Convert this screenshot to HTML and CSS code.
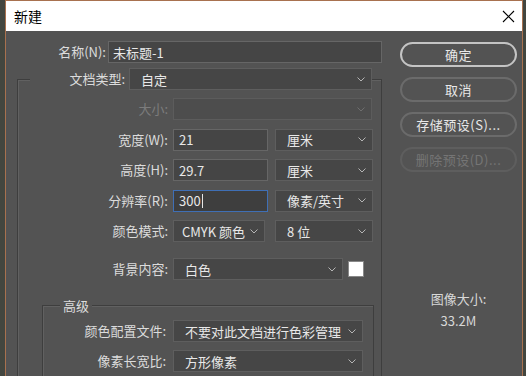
FILE: index.html
```html
<!DOCTYPE html>
<html lang="zh-CN">
<head>
    <meta charset="UTF-8">
    <title>新建</title>
    <link rel="stylesheet" href="styles.css">
</head>
<body>
    <div class="window">
        <!-- Title bar -->
        <div class="titlebar">
            <span class="title">新建</span>
            <svg class="close" width="13" height="13" viewBox="0 0 13 13">
                <path d="M1 1 L12 12 M12 1 L1 12" stroke="#000" stroke-width="1.1" fill="none"/>
            </svg>
        </div>
        <div class="dialog">
            <div class="form">
                <div class="name-row">
                    <div class="lbl">名称(N):</div>
                    <div class="field name-field">未标题-1</div>
                </div>
                <fieldset class="group">
                    <legend class="legend">
                        <span class="lbl doc-lbl">文档类型:</span>
                        <span class="field select doc-select">自定<svg class="arrow" width="8" height="5" viewBox="0 0 8 5"><path d="M0.5 0.5 L4 4 L7.5 0.5" stroke="#b5b5b5" fill="none"/></svg></span>
                    </legend>
                    <div class="row first">
                        <div class="lbl disabled">大小:</div>
                        <div class="field select disabled-field w-full"><svg class="arrow" width="8" height="5" viewBox="0 0 8 5"><path d="M0.5 0.5 L4 4 L7.5 0.5" stroke="#6e6e6e" fill="none"/></svg></div>
                    </div>
                    <div class="row">
                        <div class="lbl">宽度(W):</div>
                        <div class="field w-num">21</div>
                        <div class="field select w-unit">厘米<svg class="arrow" width="8" height="5" viewBox="0 0 8 5"><path d="M0.5 0.5 L4 4 L7.5 0.5" stroke="#b5b5b5" fill="none"/></svg></div>
                    </div>
                    <div class="row">
                        <div class="lbl">高度(H):</div>
                        <div class="field w-num">29.7</div>
                        <div class="field select w-unit">厘米<svg class="arrow" width="8" height="5" viewBox="0 0 8 5"><path d="M0.5 0.5 L4 4 L7.5 0.5" stroke="#b5b5b5" fill="none"/></svg></div>
                    </div>
                    <div class="row">
                        <div class="lbl">分辨率(R):</div>
                        <div class="field w-num focused">300<span class="caret"></span></div>
                        <div class="field select w-unit">像素/英寸<svg class="arrow" width="8" height="5" viewBox="0 0 8 5"><path d="M0.5 0.5 L4 4 L7.5 0.5" stroke="#b5b5b5" fill="none"/></svg></div>
                    </div>
                    <div class="row">
                        <div class="lbl">颜色模式:</div>
                        <div class="field select w-mode">CMYK 颜色<svg class="arrow" width="8" height="5" viewBox="0 0 8 5"><path d="M0.5 0.5 L4 4 L7.5 0.5" stroke="#b5b5b5" fill="none"/></svg></div>
                        <div class="field select w-unit">8 位<svg class="arrow" width="8" height="5" viewBox="0 0 8 5"><path d="M0.5 0.5 L4 4 L7.5 0.5" stroke="#b5b5b5" fill="none"/></svg></div>
                    </div>
                    <div class="row bg-row">
                        <div class="lbl">背景内容:</div>
                        <div class="field select w-bg">白色<svg class="arrow" width="8" height="5" viewBox="0 0 8 5"><path d="M0.5 0.5 L4 4 L7.5 0.5" stroke="#b5b5b5" fill="none"/></svg></div>
                        <div class="swatch"></div>
                    </div>
                    <fieldset class="group inner">
                        <legend class="legend adv">高级</legend>
                        <div class="row first">
                            <div class="lbl">颜色配置文件:</div>
                            <div class="field select w-adv">不要对此文档进行色彩管理<svg class="arrow" width="8" height="5" viewBox="0 0 8 5"><path d="M0.5 0.5 L4 4 L7.5 0.5" stroke="#b5b5b5" fill="none"/></svg></div>
                        </div>
                        <div class="row">
                            <div class="lbl">像素长宽比:</div>
                            <div class="field select w-adv">方形像素<svg class="arrow" width="8" height="5" viewBox="0 0 8 5"><path d="M0.5 0.5 L4 4 L7.5 0.5" stroke="#b5b5b5" fill="none"/></svg></div>
                        </div>
                    </fieldset>
                </fieldset>
            </div>
            <div class="side">
                <div class="btn default">确定</div>
                <div class="btn">取消</div>
                <div class="btn">存储预设(S)...</div>
                <div class="btn disabled">删除预设(D)...</div>
                <div class="size-info">
                    <div>图像大小:</div>
                    <div class="size-value">33.2M</div>
                </div>
            </div>
        </div>
    </div>
</body>
</html>
```

FILE: styles.css
```css
* {margin: 0; padding: 0; box-sizing: border-box;}
body {font-family: "Noto Sans CJK SC", "Noto Sans", sans-serif; font-size: 13px; background-color: #43463f; width: 526px; height: 376px; overflow: hidden;}
.window {margin-left: 5px; width: 518px; height: 376px; border: 1px solid #a8714f; border-bottom: none; background-color: #535353; color: #dcdcdc; overflow: hidden;}
/* Title bar */
.titlebar {height: 30px; background-color: #fff; display: flex; align-items: center; justify-content: space-between; padding: 0 7px 0 8px; color: #000; font-size: 14px;}
.close {display: block;}
/* Dialog body */
.dialog {display: flex; padding-top: 10px;}
.form {width: 376px; flex: none;}
.lbl {text-align: right; white-space: nowrap; flex: none; line-height: 22px;}
.lbl.disabled {color: #7c7c7c;}
.name-row {display: flex; align-items: center; gap: 2px; margin-left: 11px; height: 22px;}
.name-row .lbl {width: 89px;}
.field {height: 22px; background-color: #454545; border: 1px solid #666; color: #e8e8e8; padding: 0 5px; display: flex; align-items: center; white-space: nowrap; flex: none;}
.name-field {width: 274px; padding-left: 4px;}
.select {justify-content: space-between; padding: 0 6px 0 11px; background-color: #464646; border-color: #5e5e5e;}
.arrow {display: block; flex: none;}
.disabled-field {background-color: #4d4d4d; border-color: #5c5c5c; justify-content: flex-end;}
.focused {border-color: #3f6fb5; background-color: #3e3e3e;}
.caret {display: inline-block; width: 1px; height: 14px; background-color: #e6e6e6; margin-left: 1px;}
/* Group boxes */
.group {margin: 5px 0 0 11px; width: 365px; border: 1px solid #3e3e3e; box-shadow: inset 1px 1px 0 #616161; padding: 0 8px 60px 12px; min-width: 0;}
.legend {display: flex; align-items: center; gap: 4px; padding: 0; background-color: #535353;}
.doc-lbl {width: 95px;}
.doc-select {width: 243px;}
.row {display: flex; align-items: center; height: 22px; margin-top: 8.5px;}
.row.first {margin-top: 8px;}
.row .lbl {width: 138px; margin-right: 5px;}
.w-full {width: 199px;}
.w-num {width: 95px; margin-right: 7px;}
.w-unit {width: 98px;}
.w-mode {width: 92px; margin-right: 10px; padding-left: 8px;}
.bg-row {margin-top: 16px;}
.w-bg {width: 170px; margin-right: 5px;}
.swatch {width: 16px; height: 16px; background-color: #fff; border: 1px solid #888;}
.group.inner {margin: 17px 0 0 12px; width: 332px; padding: 0 10px 60px 17px;}
.legend.adv {padding: 0 3px; line-height: 17px; display: block;}
.inner .row.first {margin-top: 6px;}
.inner .row {margin-top: 8px;}
.inner .row .lbl {width: 106px; margin-right: 7px;}
.w-adv {width: 190px;}
/* Buttons */
.side {margin-left: 18px; width: 117px; display: flex; flex-direction: column; gap: 10px; padding-top: 1px;}
.btn {height: 25px; border: 2px solid #6b6b6b; border-radius: 13px; display: flex; align-items: center; justify-content: center; color: #e8e8e8; letter-spacing: 0.5px;}
.btn.default {border-color: #c4c4c4;}
.btn.disabled {color: #757575; border-color: #5e5e5e;}
.size-info {margin-top: 106px; text-align: center; color: #d8d8d8; line-height: 22px;}
```
